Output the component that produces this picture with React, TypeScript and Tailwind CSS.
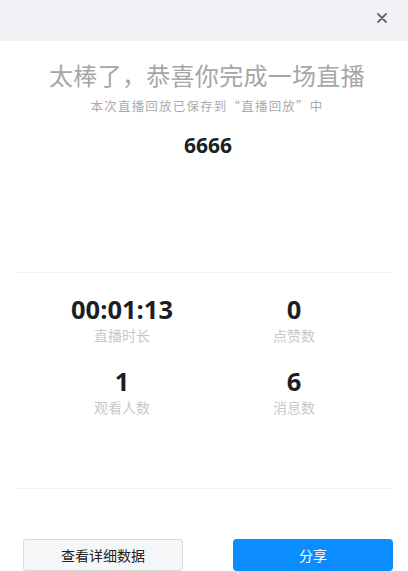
import React from "react";

const cjk = { fontFamily: '"Noto Sans CJK SC", "Noto Sans", sans-serif' };
const num = { fontFamily: '"Open Sans", "Noto Sans", sans-serif' };

function Stat({ value, label }: { value: string; label: string }) {
  return (
    <div className="flex flex-col items-center">
      <div className="text-[25.5px] leading-[32px] font-bold text-[#1b1f24]" style={num}>
        {value}
      </div>
      <div className="mt-[1px] text-[14px] leading-[18px] text-[#c8c8c8]" style={cjk}>
        {label}
      </div>
    </div>
  );
}

export default function App() {
  return (
    <div className="w-[408px] h-[571px] bg-white overflow-hidden flex flex-col" style={cjk}>
      <div className="h-[41px] bg-[#f0f2f5] flex items-center justify-end pr-[21px] shrink-0">
        <svg width="10" height="10" viewBox="0 0 10 10" className="mb-[6px]">
          <path d="M1 1 L9 9 M9 1 L1 9" stroke="#666" strokeWidth="1.8" strokeLinecap="round" />
        </svg>
      </div>
      <div className="pl-[6px] flex flex-col items-center">
        <div className="mt-[18px] text-center text-[24px] leading-[32px] text-[#a6a6a6] tracking-[0.3px]">
          太棒了，恭喜你完成一场直播
        </div>
        <div className="mt-[6px] text-center text-[12.5px] leading-[18px] text-[#ababab] tracking-[1.2px]">
          本次直播回放已保存到“直播回放”中
        </div>
        <div className="mt-[16px] pl-[2px] text-center text-[21px] leading-[28px] font-bold text-[#1b1f24]" style={num}>
          6666
        </div>
      </div>
      <div className="mx-4 mt-[113px] h-px bg-[#f0f0f0]" />
      <div className="ml-[36px] mr-[28px] mt-[20px] grid grid-cols-2 gap-y-[21px]">
        <Stat value="00:01:13" label="直播时长" />
        <Stat value="0" label="点赞数" />
        <Stat value="1" label="观看人数" />
        <Stat value="6" label="消息数" />
      </div>
      <div className="mx-4 mt-[72px] h-px bg-[#f0f0f0]" />
      <div className="mt-[50px] flex pl-[23px] gap-[50px]">
        <button className="w-[160px] h-[32px] rounded-[3px] border border-[#d9d9d9] bg-[#f5f6f7] text-[14px] text-[#222]" style={cjk}>
          查看详细数据
        </button>
        <button className="w-[160px] h-[32px] rounded-[4px] bg-[#0b8cff] text-[14px] text-white" style={cjk}>
          分享
        </button>
      </div>
    </div>
  );
}
